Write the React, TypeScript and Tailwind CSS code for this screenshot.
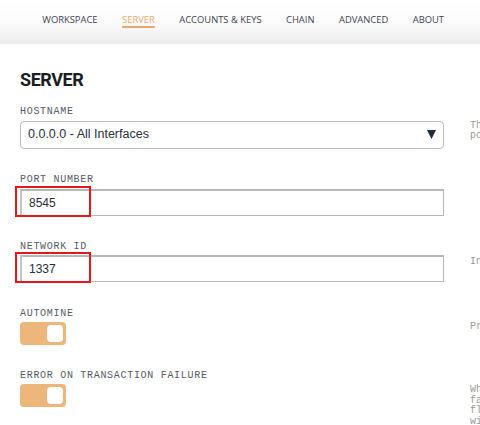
import React from "react";

const navItems = ["WORKSPACE", "SERVER", "ACCOUNTS & KEYS", "CHAIN", "ADVANCED", "ABOUT"];

function Label({ children }: { children: React.ReactNode }) {
  return (
    <div className="h-[12px] leading-[12px] mb-[2.5px] text-[10px] tracking-[0.7px] text-[#565c68] font-['Liberation_Mono',monospace] whitespace-nowrap">
      {children}
    </div>
  );
}

function Help({ lines, className }: { lines: string[]; className: string }) {
  return (
    <div className={`text-[10px] leading-[10.5px] text-[#9a9a9a] font-['Liberation_Mono',monospace] ${className}`}>
      {lines.map((l, i) => (
        <div key={i} className="whitespace-nowrap">
          {l}
        </div>
      ))}
    </div>
  );
}

function TextField({ value, marked }: { value: string; marked?: boolean }) {
  return (
    <div className="relative">
      <div className="h-[27px] flex items-center pl-[7px] bg-white border-t-2 border-l-2 border-r border-b border-t-[#b8b8b8] border-l-[#c4c4c4] border-r-[#b9b9b9] border-b-[#b9b9b9] text-[12px] text-[#253042] font-['Liberation_Sans',sans-serif]">
        {value}
      </div>
      {marked && (
        <div className="absolute -left-[5px] -top-[3px] w-[76px] h-[31px] border-2 border-[#e5161c]" />
      )}
    </div>
  );
}

function Toggle() {
  return (
    <div className="w-[46px] h-[23px] rounded-[4px] bg-[#edb67b] flex items-center justify-end pr-[3px]">
      <div className="w-[16px] h-[17px] rounded-[4px] bg-white" />
    </div>
  );
}

export default function App() {
  return (
    <div className="w-[480px] h-[425px] overflow-hidden bg-white">
      {/* Top nav */}
      <div className="h-[44px] bg-linear-to-b from-white via-[#fbfbfb] to-[#ececec] shadow-[0_1px_2px_rgba(0,0,0,0.04)] flex items-center justify-end pr-[36px] pb-[3px] gap-[24.5px] font-['Open_Sans',sans-serif] text-[9.4px]">
        {navItems.map((item) => (
          <span
            key={item}
            className={
              item === "SERVER"
                ? "text-[#eba86c] underline underline-offset-[3px] decoration-[1.5px] whitespace-nowrap"
                : "text-[#3c4352] whitespace-nowrap"
            }
          >
            {item}
          </span>
        ))}
      </div>

      {/* Content */}
      <div className="pl-[20px] pt-[25px]">
        <h2 className="text-[18px] leading-[22px] font-bold tracking-tight text-[#1a1d24] font-['Roboto',sans-serif]">
          SERVER
        </h2>

        <div className="mt-[15px] grid grid-cols-[424px_300px] gap-x-[26px]">
          {/* Hostname */}
          <div>
            <Label>HOSTNAME</Label>
            <div className="h-[28px] rounded-[4px] border border-[#bdbdbd] bg-white flex items-center justify-between pl-[7px] pr-[7px] text-[12.5px] text-[#2a3140] font-['Liberation_Sans',sans-serif]">
              <span>0.0.0.0 - All Interfaces</span>
              <svg width="9" height="9" viewBox="0 0 9 9">
                <polygon points="0,0 9,0 4.5,9" fill="#1f2a3c" />
              </svg>
            </div>
          </div>
          <Help
            className="mt-[14.5px]"
            lines={["The server will accept RPC connections on the following host and", "port."]}
          />

          {/* Port */}
          <div className="mt-[25.5px]">
            <Label>PORT NUMBER</Label>
            <TextField value="8545" marked />
          </div>
          <div />

          {/* Network ID */}
          <div className="mt-[25px]">
            <Label>NETWORK ID</Label>
            <TextField value="1337" marked />
          </div>
          <Help className="mt-[41.5px]" lines={["Internal blockchain identifier of Ganache server."]} />

          {/* Automine */}
          <div className="mt-[25.5px]">
            <Label>AUTOMINE</Label>
            <Toggle />
          </div>
          <Help className="mt-[39.5px]" lines={["Process transactions instantaneously."]} />

          {/* Error on transaction failure */}
          <div className="mt-[24.5px]">
            <Label>ERROR ON TRANSACTION FAILURE</Label>
            <Toggle />
          </div>
          <Help
            className="mt-[40px]"
            lines={[
              "When transactions",
              "fail, throw an error. If disabled, transaction failures will",
              "flag in the transaction receipt. Disabling this feature",
              "will make Ganache handle transaction failures like other clients.",
            ]}
          />
        </div>
      </div>
    </div>
  );
}
